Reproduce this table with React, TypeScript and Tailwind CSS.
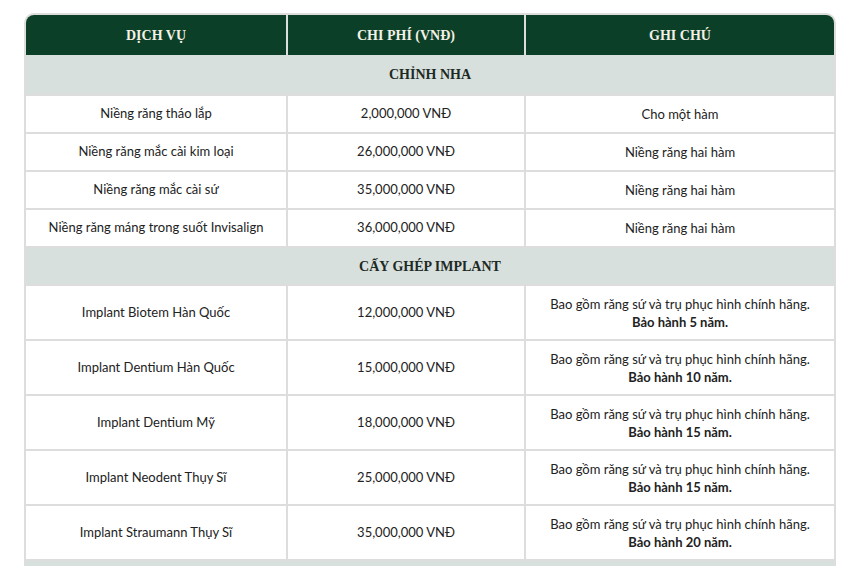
import React from "react";

type Row = { service: string; price: string; note: string; warranty?: string };

const ortho: Row[] = [
  { service: "Niềng răng tháo lắp", price: "2,000,000 VNĐ", note: "Cho một hàm" },
  { service: "Niềng răng mắc cài kim loại", price: "26,000,000 VNĐ", note: "Niềng răng hai hàm" },
  { service: "Niềng răng mắc cài sứ", price: "35,000,000 VNĐ", note: "Niềng răng hai hàm" },
  { service: "Niềng răng máng trong suốt Invisalign", price: "36,000,000 VNĐ", note: "Niềng răng hai hàm" },
];

const implantNote = "Bao gồm răng sứ và trụ phục hình chính hãng.";

const implants: Row[] = [
  { service: "Implant Biotem Hàn Quốc", price: "12,000,000 VNĐ", note: implantNote, warranty: "Bảo hành 5 năm." },
  { service: "Implant Dentium Hàn Quốc", price: "15,000,000 VNĐ", note: implantNote, warranty: "Bảo hành 10 năm." },
  { service: "Implant Dentium Mỹ", price: "18,000,000 VNĐ", note: implantNote, warranty: "Bảo hành 15 năm." },
  { service: "Implant Neodent Thụy Sĩ", price: "25,000,000 VNĐ", note: implantNote, warranty: "Bảo hành 15 năm." },
  { service: "Implant Straumann Thụy Sĩ", price: "35,000,000 VNĐ", note: implantNote, warranty: "Bảo hành 20 năm." },
];

const cols = "grid grid-cols-[260px_2px_236px_2px_308px]";
const divider = <div className="bg-[#dddddd]" />;

const Section = ({ title, h, top = true }: { title?: string; h: string; top?: boolean }) => (
  <div className={`${top ? "border-t-2" : ""} border-[#dddddd] bg-[#d8e0dd] ${h} flex items-center justify-center`}>
    {title && <span className="font-['Liberation_Serif',serif] text-[14px] font-bold text-[#1d2a24]">{title}</span>}
  </div>
);

const BodyRow = ({ row, h }: { row: Row; h: string }) => (
  <div className={`${cols} border-t-2 border-[#dddddd] ${h}`}>
    <div className="flex items-center justify-center text-center">{row.service}</div>
    {divider}
    <div className="flex items-center justify-center text-center">{row.price}</div>
    {divider}
    <div className="flex flex-col items-center justify-center text-center leading-[18px]">
      <span>{row.note}</span>
      {row.warranty && <span className="font-bold">{row.warranty}</span>}
    </div>
  </div>
);

export default function App() {
  return (
    <div className="h-[566px] overflow-hidden bg-white pl-[24px] pt-[13px] font-['Lato',sans-serif] text-[13px] text-[#222222]">
      <div className="w-[812px] overflow-hidden rounded-t-[10px] border-2 border-b-0 border-[#dddddd]">
        <div className={`${cols} h-[40px] bg-[#0c3f27] font-['Liberation_Serif',serif] text-[14px] font-bold text-[#f4f1e6]`}>
          <div className="flex items-center justify-center">DỊCH VỤ</div>
          {divider}
          <div className="flex items-center justify-center">CHI PHÍ (VNĐ)</div>
          {divider}
          <div className="flex items-center justify-center">GHI CHÚ</div>
        </div>
        <Section title="CHỈNH NHA" h="h-[39px]" top={false} />
        {ortho.map((r) => (
          <BodyRow key={r.service} row={r} h="h-[38px]" />
        ))}
        <Section title="CẤY GHÉP IMPLANT" h="h-[38px]" />
        {implants.map((r) => (
          <BodyRow key={r.service} row={r} h="h-[55px]" />
        ))}
        <Section h="h-[40px]" />
      </div>
    </div>
  );
}
